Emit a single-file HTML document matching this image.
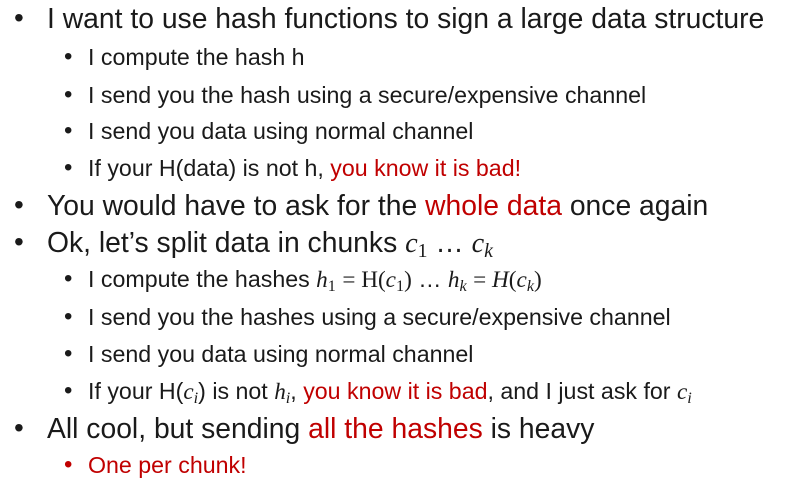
<!DOCTYPE html>
<html><head><meta charset="utf-8"><style>
body{margin:0;width:787px;height:484px;background:#fff;position:relative;overflow:hidden;font-family:"Liberation Sans",sans-serif;color:#1a1a1a}
.l{position:absolute;white-space:nowrap;line-height:1}
.a{left:47px;font-size:28.3px;letter-spacing:0}
.b{left:88px;font-size:23.2px;letter-spacing:0}
.a:before{content:"•";position:absolute;left:-33px;font-size:28px;top:0px}
.b:before{content:"•";position:absolute;left:-24px;font-size:24px;top:-1px}
.r{color:#c00000}
.rb:before{color:#c00000}
i,.m{font-family:"Liberation Serif",serif}
i{font-style:italic}
sub{font-size:0.7em;vertical-align:-0.25em;line-height:0}
</style></head><body>
<div class="l a" style="top:4px">I want to use hash functions to sign a large data structure</div>
<div class="l b" style="top:46px">I compute the hash h</div>
<div class="l b" style="top:84px">I send you the hash using a secure/expensive channel</div>
<div class="l b" style="top:120px">I send you data using normal channel</div>
<div class="l b" style="top:157px">If your H(data) is not h, <span class="r">you know it is bad!</span></div>
<div class="l a" style="top:191px">You would have to ask for the <span class="r">whole data</span> once again</div>
<div class="l a" style="top:228px">Ok, let’s split data in chunks <i>c</i><sub class="m">1</sub> … <i>c<sub>k</sub></i></div>
<div class="l b" style="top:268px">I compute the hashes <i>h</i><sub class="m">1</sub> <span class="m">= H(</span><i>c</i><sub class="m">1</sub><span class="m">)</span> … <i>h<sub>k</sub></i> <span class="m">= </span><i>H</i><span class="m">(</span><i>c<sub>k</sub></i><span class="m">)</span></div>
<div class="l b" style="top:306px">I send you the hashes using a secure/expensive channel</div>
<div class="l b" style="top:343px">I send you data using normal channel</div>
<div class="l b" style="top:380px">If your H(<i>c<sub>i</sub></i>) is not <i>h<sub>i</sub></i>, <span class="r">you know it is bad</span>, and I just ask for <i>c<sub>i</sub></i></div>
<div class="l a" style="top:414px">All cool, but sending <span class="r">all the hashes</span> is heavy</div>
<div class="l b rb" style="top:454px"><span class="r">One per chunk!</span></div>
</body></html>
